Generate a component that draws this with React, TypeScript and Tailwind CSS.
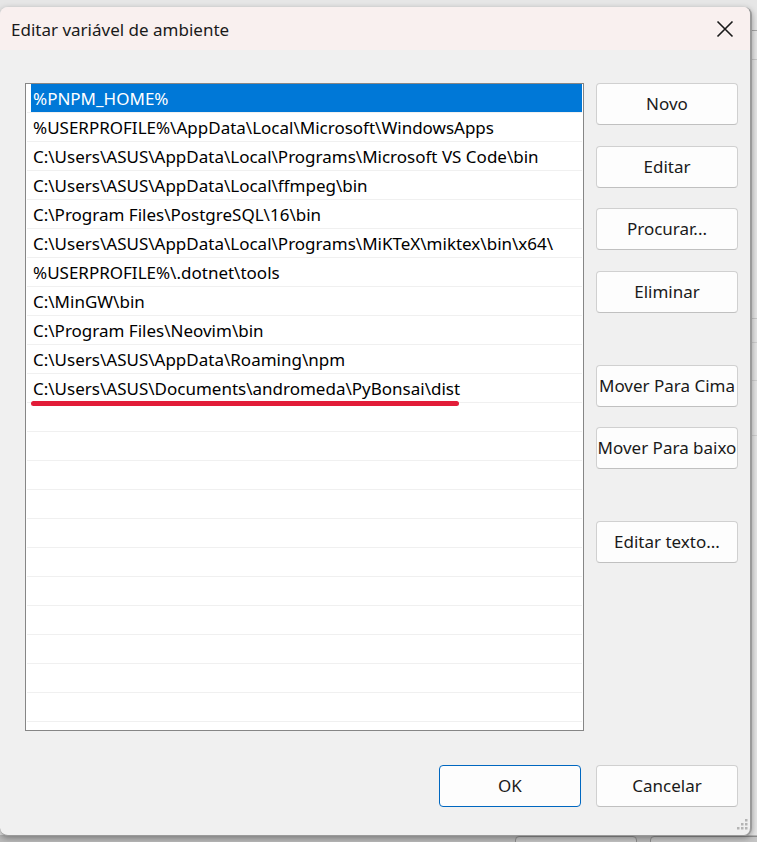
import React from "react";

const paths: string[] = [
  "%PNPM_HOME%",
  "%USERPROFILE%\\AppData\\Local\\Microsoft\\WindowsApps",
  "C:\\Users\\ASUS\\AppData\\Local\\Programs\\Microsoft VS Code\\bin",
  "C:\\Users\\ASUS\\AppData\\Local\\ffmpeg\\bin",
  "C:\\Program Files\\PostgreSQL\\16\\bin",
  "C:\\Users\\ASUS\\AppData\\Local\\Programs\\MiKTeX\\miktex\\bin\\x64\\",
  "%USERPROFILE%\\.dotnet\\tools",
  "C:\\MinGW\\bin",
  "C:\\Program Files\\Neovim\\bin",
  "C:\\Users\\ASUS\\AppData\\Roaming\\npm",
  "C:\\Users\\ASUS\\Documents\\andromeda\\PyBonsai\\dist",
];

const TOTAL_ROWS = 22;

function Btn({ label, primary = false }: { label: string; primary?: boolean }) {
  return (
    <button
      className={
        primary
          ? "w-[142px] h-[42px] rounded-[4px] border border-[#0067c0] bg-[#fdfdfd] text-[17px] text-[#1a1a1a] whitespace-nowrap flex items-center justify-center"
          : "w-[142px] h-[42px] rounded-[4px] border border-[#d0d0d0] border-b-[#c0c0c0] bg-[#fdfdfd] text-[17px] text-[#1a1a1a] whitespace-nowrap flex items-center justify-center"
      }
    >
      {label}
    </button>
  );
}

export default function App() {
  const rows = Array.from({ length: TOTAL_ROWS }, (_, i) => paths[i] ?? "");
  return (
    <div
      className="relative w-[757px] h-[842px] overflow-hidden bg-[#e6e6e6]"
      style={{ fontFamily: '"Noto Sans", "Liberation Sans", sans-serif' }}
    >
      {/* desktop behind the dialog */}
      <div className="absolute right-0 top-[30px] w-[8px] h-px bg-[#a8a8a8]" />
      <div className="absolute right-0 top-[59px] w-[8px] h-px bg-[#c8c8c8]" />
      <div className="absolute right-0 top-[318px] w-[8px] h-px bg-[#c8c8c8]" />
      <div className="absolute right-0 top-[342px] w-[8px] h-px bg-[#d0d0d0]" />
      <div className="absolute right-0 top-[380px] w-[8px] h-px bg-[#d0d0d0]" />
      <div className="absolute right-0 top-[435px] w-[8px] h-px bg-[#d0d0d0]" />
      <div className="absolute left-0 right-0 top-[835px] bottom-0 bg-[#b9b9b9]" />
      <div className="absolute left-[515px] top-[836px] w-[122px] h-[12px] rounded-t-[4px] border border-[#8c8c8c] bg-[#c4c4c4]" />
      <div className="absolute left-[650px] top-[836px] w-[120px] h-[12px] rounded-t-[4px] border border-[#8c8c8c] bg-[#c4c4c4]" />

      {/* dialog window */}
      <div className="absolute left-0 top-[7px] w-[752px] h-[829px] flex flex-col rounded-t-[8px] rounded-b-[8px] border-r-2 border-b border-[#9a9a9a] bg-[#f0f0f0] shadow-[0_2px_6px_rgba(0,0,0,0.35)] overflow-hidden">
        {/* title bar */}
        <div className="h-[43px] shrink-0 bg-[#f9f0ef] flex items-center justify-between pl-[11px] pr-[16px]">
          <span className="text-[17px] text-[#1a1a1a] pt-[2px]">Editar variável de ambiente</span>
          <svg width="18" height="18" viewBox="0 0 18 18" className="mt-[1px]">
            <path d="M1.5 1.5 L16.5 16.5 M16.5 1.5 L1.5 16.5" stroke="#1a1a1a" strokeWidth="1.6" fill="none" />
          </svg>
        </div>

        {/* body */}
        <div className="relative flex-1 flex flex-col pl-[25px] pr-[12px] pt-[33px]">
          <div className="flex gap-[12px]">
            {/* path list */}
            <div className="relative w-[559px] h-[648px] shrink-0 border border-[#868686] bg-white px-px overflow-hidden">
              {rows.map((p, i) => (
                <div key={i} className="h-[29px] border-b border-[#f0f0f0] flex items-stretch">
                  {i === 0 ? (
                    <div className="ml-[4px] flex-1 bg-[#0078d7] text-white text-[17px] leading-[29px] pl-[2px] whitespace-nowrap">
                      {p}
                    </div>
                  ) : (
                    <div className="ml-[4px] flex-1 text-[#000000] text-[17px] leading-[29px] pl-[2px] whitespace-nowrap">
                      {p}
                    </div>
                  )}
                </div>
              ))}
              {/* red marker under the new entry */}
              <div className="absolute left-[5px] top-[317px] w-[428px] h-[5px] rounded-full bg-[#e21c38]" />
            </div>

            {/* action buttons */}
            <div className="flex flex-col">
              <Btn label="Novo" />
              <div className="h-[21px]" />
              <Btn label="Editar" />
              <div className="h-[20px]" />
              <Btn label="Procurar..." />
              <div className="h-[21px]" />
              <Btn label="Eliminar" />
              <div className="h-[52px]" />
              <Btn label="Mover Para Cima" />
              <div className="h-[20px]" />
              <Btn label="Mover Para baixo" />
              <div className="h-[52px]" />
              <Btn label="Editar texto..." />
            </div>
          </div>

          {/* OK / Cancel */}
          <div className="mt-[34px] flex justify-end gap-[15px]">
            <Btn label="OK" primary />
            <Btn label="Cancelar" />
          </div>

          {/* resize grip */}
          <svg width="12" height="12" viewBox="0 0 12 12" className="absolute right-[2px] bottom-[4px]">
            <rect x="9" y="0" width="2.5" height="2.5" fill="#b4b4b4" />
            <rect x="5" y="4" width="2.5" height="2.5" fill="#b4b4b4" />
            <rect x="9" y="4" width="2.5" height="2.5" fill="#b4b4b4" />
            <rect x="1" y="8" width="2.5" height="2.5" fill="#b4b4b4" />
            <rect x="5" y="8" width="2.5" height="2.5" fill="#b4b4b4" />
            <rect x="9" y="8" width="2.5" height="2.5" fill="#b4b4b4" />
          </svg>
        </div>
      </div>
    </div>
  );
}
